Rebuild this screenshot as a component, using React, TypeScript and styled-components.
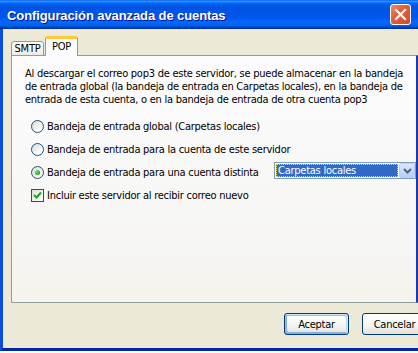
import * as React from "react";
import styled, { createGlobalStyle } from "styled-components";

const GlobalStyle = createGlobalStyle`
  html, body {
    margin: 0;
    padding: 0;
    background: #ffffff;
  }
  body {
    font-family: "DejaVu Sans Condensed", "DejaVu Sans", sans-serif;
    font-stretch: semi-condensed;
    font-size: 11px;
    letter-spacing: -0.25px;
    color: #000;
  }
`;

const Root = styled.div`
  width: 418px;
  height: 353px;
  overflow: hidden;
  background: #ffffff;
`;

const Window = styled.div`
  width: 418px;
  height: 351px;
  display: flex;
  flex-direction: column;
  background: #ece9d8;
`;

const TitleBar = styled.div`
  height: 29px;
  flex: none;
  display: flex;
  align-items: center;
  justify-content: space-between;
  padding: 0 7px 0 7px;
  background: linear-gradient(
    to bottom,
    #0058ee 0%,
    #3593ff 4%,
    #288eff 6%,
    #127dff 8%,
    #036ffc 10%,
    #0262ee 14%,
    #0057e5 20%,
    #0054e3 24%,
    #0055eb 56%,
    #005bf5 66%,
    #026afe 76%,
    #0062ef 86%,
    #0052d6 92%,
    #0040ab 94%,
    #003092 100%
  );
`;

const Title = styled.div`
  color: #ffffff;
  font-family: "Liberation Sans", Arial, sans-serif;
  font-stretch: normal;
  font-weight: bold;
  font-size: 13px;
  letter-spacing: -0.1px;
  text-shadow: 1px 1px #0f1089;
  padding-top: 1px;
`;

const CloseButton = styled.div`
  width: 21px;
  height: 21px;
  box-sizing: border-box;
  border: 1px solid #ffffff;
  border-radius: 3px;
  background: linear-gradient(135deg, #ee8a6a 0%, #e2603d 40%, #d54a22 100%);
  display: flex;
  align-items: center;
  justify-content: center;
`;

const Body = styled.div`
  flex: 1;
  min-height: 0;
  display: flex;
  flex-direction: column;
  border-left: 3px solid #0a4be0;
  border-bottom: 3px solid #0027a8;
  padding: 8px 0 0 8px;
  overflow: hidden;
`;

const TabStrip = styled.div`
  display: flex;
  align-items: flex-end;
  gap: 1px;
  height: 19px;
  position: relative;
  z-index: 1;
  margin-bottom: -1px;
`;

const Tab = styled.div<{ $active?: boolean }>`
  width: 33px;
  height: ${p => (p.$active ? 20 : 15)}px;
  box-sizing: border-box;
  border: 1px solid #919b9c;
  border-bottom: ${p => (p.$active ? "none" : "1px solid #919b9c")};
  border-top: ${p => (p.$active ? "3px solid #ffc83c" : "1px solid #919b9c")};
  border-radius: 3px 3px 0 0;
  background: ${p =>
    p.$active ? "#fcfcfe" : "linear-gradient(to bottom, #ffffff, #ecebe6)"};
  display: flex;
  justify-content: center;
  align-items: ${p => (p.$active ? "flex-start" : "center")};
  padding-top: ${p => (p.$active ? 1 : 0)}px;
  line-height: 13px;
  font-size: 11px;
`;

const Panel = styled.div`
  flex: none;
  height: 248px;
  box-sizing: border-box;
  border: 1px solid #919b9c;
  border-right: 2px solid #1a3ab4;
  background: linear-gradient(to bottom, #fcfcfe, #f4f3ee);
  padding: 11px 0 0 13px;
`;

const Intro = styled.p`
  margin: 0;
  font-size: 11px;
  line-height: 13px;
  white-space: nowrap;
`;

const Options = styled.div`
  display: flex;
  flex-direction: column;
  gap: 1px;
  margin-top: 9px;
`;

const OptionRow = styled.div`
  height: 22px;
  display: flex;
  align-items: center;
  padding-left: 6px;
`;

const Radio = styled.span<{ $checked?: boolean }>`
  width: 13px;
  height: 13px;
  flex: none;
  box-sizing: border-box;
  border: 1px solid #1c5180;
  border-radius: 50%;
  background: linear-gradient(135deg, #dcdcd7 0%, #ffffff 85%);
  display: flex;
  align-items: center;
  justify-content: center;
  &::after {
    content: "";
    display: ${p => (p.$checked ? "block" : "none")};
    width: 5px;
    height: 5px;
    border-radius: 50%;
    background: radial-gradient(circle at 35% 35%, #7ee27a 0%, #21a121 70%);
  }
`;

const CheckBox = styled.span`
  width: 13px;
  height: 13px;
  flex: none;
  box-sizing: border-box;
  border: 1px solid #1c5180;
  background: linear-gradient(135deg, #dcdcd7 0%, #ffffff 85%);
  display: flex;
  align-items: center;
  justify-content: center;
`;

const Label = styled.span<{ $width?: number }>`
  margin-left: 3px;
  line-height: 13px;
  white-space: nowrap;
  ${p => (p.$width ? `width: ${p.$width}px; flex: none;` : "")}
`;

const Combo = styled.div`
  width: 142px;
  height: 17px;
  box-sizing: border-box;
  border: 1px solid #7f9db9;
  background: #ffffff;
  display: flex;
  margin-top: -3px;
`;

const ComboValue = styled.div`
  flex: 1;
  margin: 1px;
  background: #316ac5;
  color: #ffffff;
  outline: 1px dotted #f2d44a;
  outline-offset: -1px;
  padding-left: 2px;
  line-height: 13px;
  white-space: nowrap;
`;

const ComboButton = styled.div`
  width: 16px;
  flex: none;
  box-sizing: border-box;
  border: 1px solid #bacff8;
  border-radius: 2px;
  background: linear-gradient(to bottom, #dde7fd, #b9cdf8);
  display: flex;
  align-items: center;
  justify-content: center;
`;

const ButtonRow = styled.div`
  display: flex;
  justify-content: flex-end;
  gap: 13px;
  margin-top: 10px;
  margin-right: -9px;
`;

const Button = styled.button<{ $default?: boolean }>`
  width: 65px;
  height: 22px;
  flex: none;
  box-sizing: border-box;
  border: 1px solid #003c74;
  border-radius: 3px;
  background: linear-gradient(to bottom, #ffffff 0%, #f4f4f0 60%, #e3e0d6 100%);
  font-family: inherit;
  font-stretch: inherit;
  letter-spacing: inherit;
  font-size: 11px;
  color: #000;
  padding: 0;
  box-shadow: ${p =>
    p.$default
      ? "inset -1px 1px #cee7ff, inset 1px 2px #98b8ea, inset -2px 2px #bcd4f6, inset 1px -1px #89ade4, inset 2px -2px #89ade4"
      : "none"};
`;

const CloseGlyph = () => (
  <svg width="13" height="13" viewBox="0 0 13 13">
    <path d="M2 2 L11 11 M11 2 L2 11" stroke="#ffffff" strokeWidth="2.2" strokeLinecap="square" />
  </svg>
);

const CheckGlyph = () => (
  <svg width="9" height="9" viewBox="0 0 9 9">
    <path d="M1 4 L3.5 6.5 L8 1.5" fill="none" stroke="#21a121" strokeWidth="2" />
  </svg>
);

const ChevronGlyph = () => (
  <svg width="9" height="6" viewBox="0 0 9 6">
    <path d="M1 1 L4.5 4.5 L8 1" fill="none" stroke="#4d6185" strokeWidth="2" />
  </svg>
);

const App: React.FC = () => {
  return (
    <Root>
      <GlobalStyle />
      <Window>
        <TitleBar>
          <Title>Configuración avanzada de cuentas</Title>
          <CloseButton>
            <CloseGlyph />
          </CloseButton>
        </TitleBar>
        <Body>
          <TabStrip>
            <Tab>SMTP</Tab>
            <Tab $active>POP</Tab>
          </TabStrip>
          <Panel>
            <Intro>
              Al descargar el correo pop3 de este servidor, se puede almacenar en la bandeja
              <br />
              de entrada global (la bandeja de entrada en Carpetas locales), en la bandeja de
              <br />
              entrada de esta cuenta, o en la bandeja de entrada de otra cuenta pop3
            </Intro>
            <Options>
              <OptionRow>
                <Radio />
                <Label>Bandeja de entrada global (Carpetas locales)</Label>
              </OptionRow>
              <OptionRow>
                <Radio />
                <Label>Bandeja de entrada para la cuenta de este servidor</Label>
              </OptionRow>
              <OptionRow>
                <Radio $checked />
                <Label $width={227}>Bandeja de entrada para una cuenta distinta</Label>
                <Combo>
                  <ComboValue>Carpetas locales</ComboValue>
                  <ComboButton>
                    <ChevronGlyph />
                  </ComboButton>
                </Combo>
              </OptionRow>
              <OptionRow>
                <CheckBox>
                  <CheckGlyph />
                </CheckBox>
                <Label>Incluir este servidor al recibir correo nuevo</Label>
              </OptionRow>
            </Options>
          </Panel>
          <ButtonRow>
            <Button $default>Aceptar</Button>
            <Button>Cancelar</Button>
          </ButtonRow>
        </Body>
      </Window>
    </Root>
  );
};

export default App;
